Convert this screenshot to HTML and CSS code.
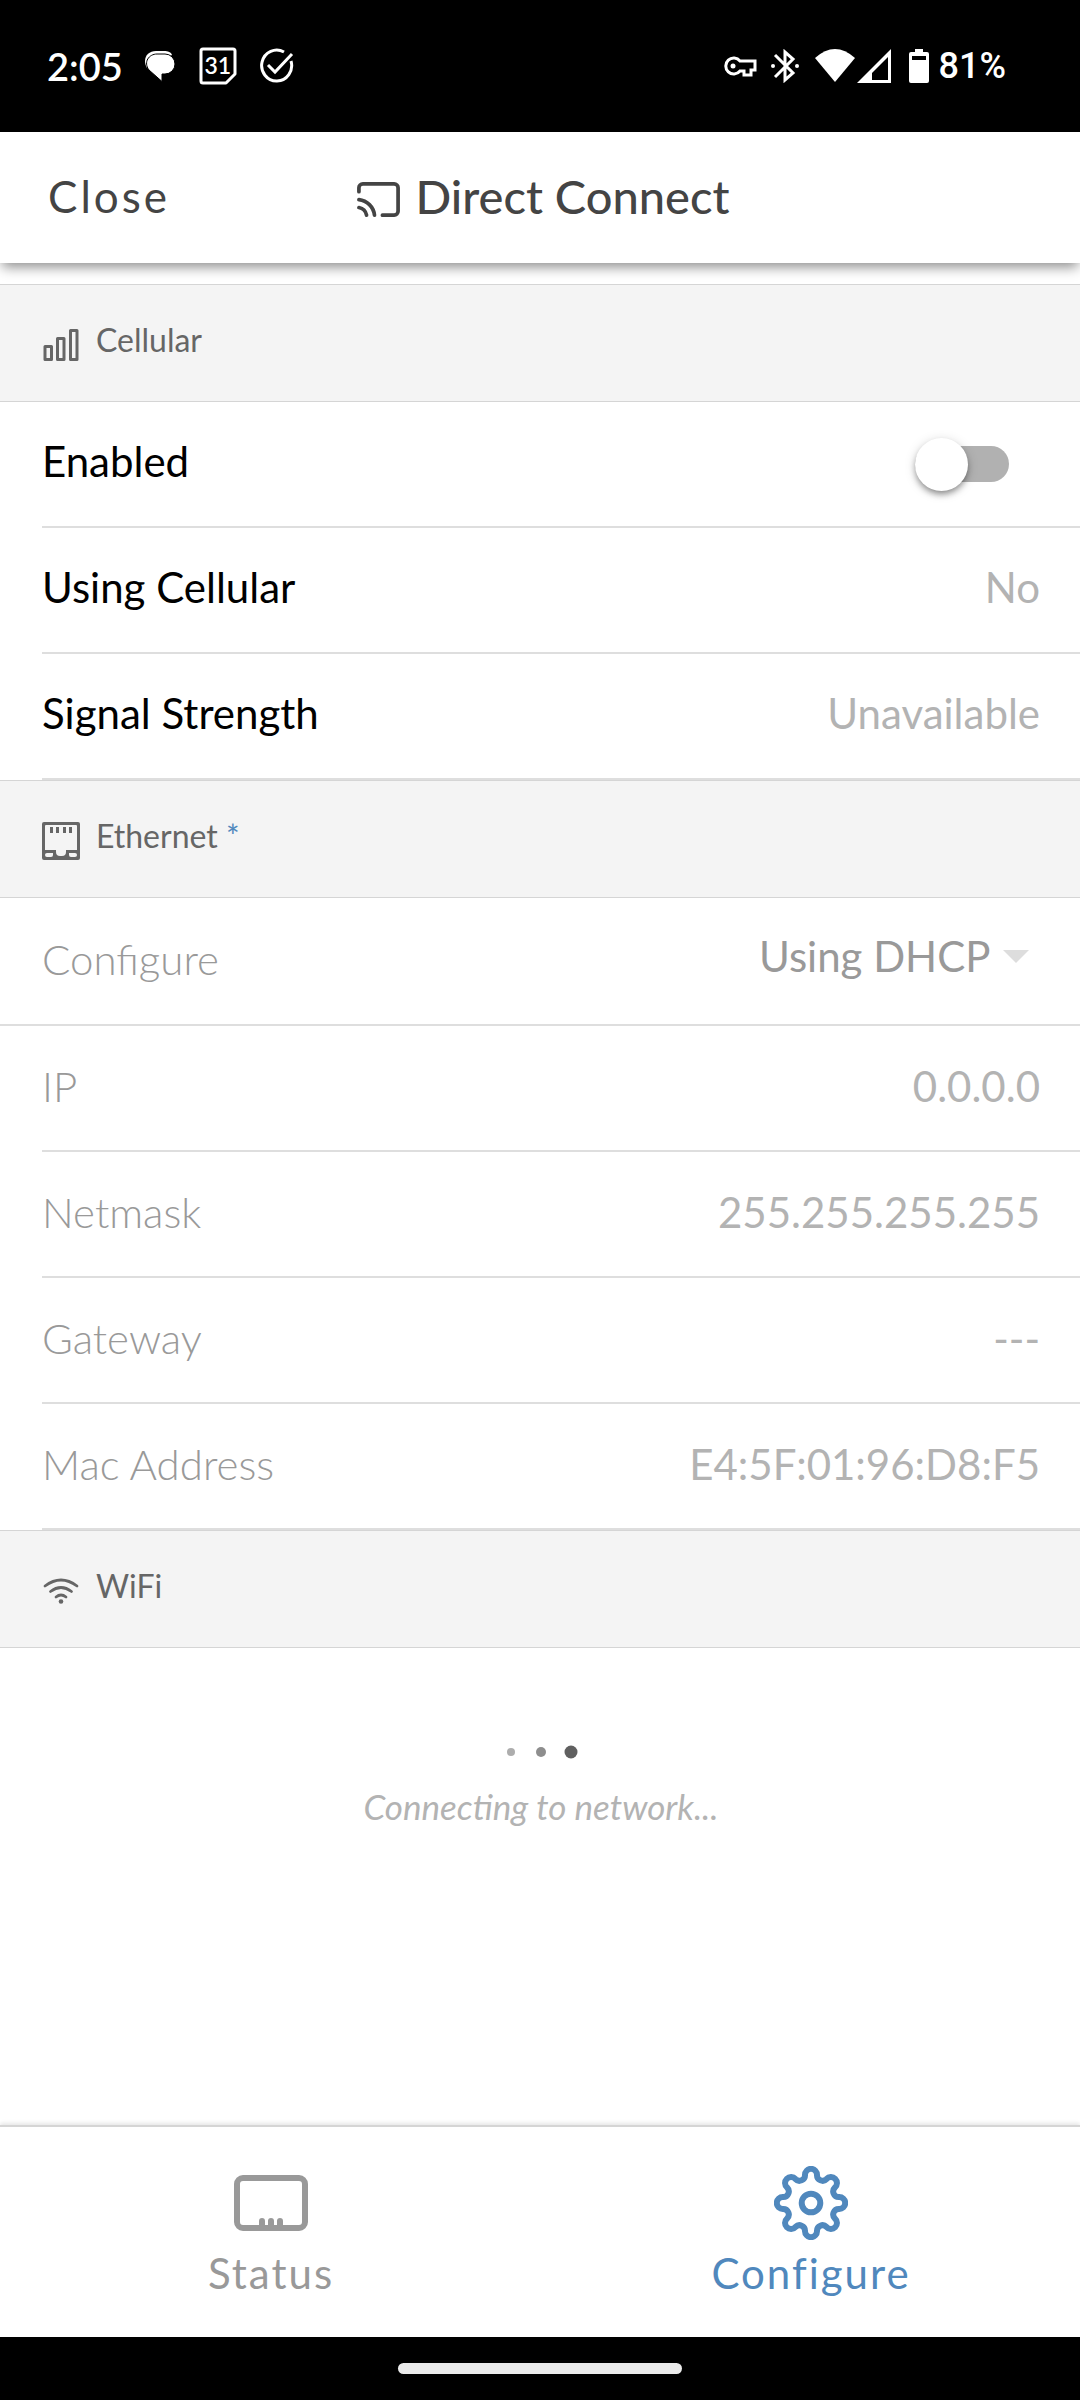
FILE: index.html
```html
<!DOCTYPE html>
<html lang="en">
<head>
  <meta charset="UTF-8" />
  <meta name="viewport" content="width=device-width, initial-scale=1" />
  <title>Direct Connect</title>
  <link rel="stylesheet" href="styles.css">
</head>
<body>
  <div class="status-bar">
    <div class="status-left">
      <span class="clock">2:05</span>
      <svg class="chat" width="32" height="32" viewBox="0 0 32 32">
        <path d="M3 18C-2 9 3 1 12 1h8c4 0 7 1 8 4" fill="#fff"/>
        <path d="M13 4h8a10 10 0 0 1 0 20h-3v7.500L5 20C-1 12 5 4 13 4z" fill="#fff" stroke="#000" stroke-width="1"/>
      </svg>
      <span class="calendar">
        <svg width="38" height="38" viewBox="0 0 38 38" fill="none" stroke="#fff" stroke-width="3" stroke-linejoin="round">
          <path d="M4 2h30a2 2 0 0 1 2 2v23l-9 9H4a2 2 0 0 1-2-2V4a2 2 0 0 1 2-2z"/>
        </svg>
        <span class="calendar-day">31</span>
      </span>
      <svg width="34" height="36" viewBox="0 0 34 36" fill="none" stroke="#fff" stroke-width="3">
        <path d="M24 4A15 15.500 0 1 0 31 13"/>
        <path d="M8 17l7 7L32 6"/>
      </svg>
    </div>
    <div class="status-right">
      <svg class="key" width="34" height="22" viewBox="0 0 34 22" fill="none" stroke="#fff" stroke-width="3">
        <path d="M17 6a8 8 0 1 0 0 10h4v4h7v-5h4V6z"/>
        <circle cx="10" cy="11" r="2.500" fill="#fff" stroke="none"/>
      </svg>
      <svg class="bluetooth" width="28" height="34" viewBox="0 0 28 34" fill="none" stroke="#fff" stroke-width="3">
        <path d="M4 6l18 18-8 7V3l8 7L4 28"/>
        <circle cx="2" cy="17" r="2" fill="#fff" stroke="none"/>
        <circle cx="26" cy="17" r="2" fill="#fff" stroke="none"/>
      </svg>
      <svg width="40" height="34" viewBox="0 0 40 34">
        <path d="M0 9Q20-9 40 9L20 33z" fill="#fff"/>
      </svg>
      <svg class="signal" width="34" height="34" viewBox="0 0 34 34">
        <path d="M34 0v34H0zM31 8L15 24v7h16z" fill="#fff" fill-rule="evenodd"/>
      </svg>
      <svg class="battery" width="20" height="34" viewBox="0 0 20 34">
        <path d="M6 0h8v3h4a2 2 0 0 1 2 2v27a2 2 0 0 1-2 2H2a2 2 0 0 1-2-2V5a2 2 0 0 1 2-2h4zM3 7v4h14V7z" fill="#fff" fill-rule="evenodd"/>
      </svg>
      <span class="percent">81%</span>
    </div>
  </div>

  <header class="toolbar">
    <button class="close-btn" type="button">Close</button>
    <h1 class="title">
      <svg width="47" height="47" viewBox="0 0 24 24" fill="none" stroke="currentColor" stroke-width="1.900" stroke-linecap="round" stroke-linejoin="round">
        <path d="M2 16.100A5 5 0 0 1 5.900 20M2 12.050A9 9 0 0 1 9.950 20M2 8V6a2 2 0 0 1 2-2h16a2 2 0 0 1 2 2v12a2 2 0 0 1-2 2h-6"/>
      </svg>
      Direct Connect
    </h1>
  </header>

  <main class="content">
    <h2 class="section-title">
      <svg width="38" height="38" viewBox="0 0 38 38" fill="none" stroke="currentColor" stroke-width="3" stroke-linejoin="round">
        <path d="M3 20.500h6.500v13H3zM15.500 12.500H22v21h-6.500zM28.500 4.500H35v29h-6.500z"/>
      </svg>
      Cellular
    </h2>
    <div class="row">
      <label for="enabled">Enabled</label>
      <input class="toggle" type="checkbox" role="switch" id="enabled">
    </div>
    <div class="row">
      <span>Using Cellular</span>
      <span class="value">No</span>
    </div>
    <div class="row">
      <span>Signal Strength</span>
      <span class="value">Unavailable</span>
    </div>

    <h2 class="section-title">
      <svg width="38" height="38" viewBox="0 0 38 38" fill="currentColor">
        <path fill-rule="evenodd" d="M2 0h34a2 2 0 0 1 2 2v34a2 2 0 0 1-2 2H2a2 2 0 0 1-2-2V2a2 2 0 0 1 2-2zM4 3a1 1 0 0 0-1 1v24h11v2a4 4 0 0 0 4 4h2a4 4 0 0 0 4-4v-2h11V4a1 1 0 0 0-1-1zM5 31a2 2 0 0 0 0 4h4a2 2 0 0 0 2-2v-2zM27 31v2a2 2 0 0 0 2 2h4a2 2 0 0 0 0-4z"/>
        <path d="M8 5h3v6H8zM14 5h3v6h-3zM21 5h3v6h-3zM27 5h3v6h-3z"/>
      </svg>
      <span>Ethernet <span class="mark">*</span></span>
    </h2>
    <div class="row row-select disabled">
      <label for="mode">Configure</label>
      <div class="select-wrap">
        <select id="mode" disabled>
          <option>Using DHCP</option>
        </select>
      </div>
    </div>
    <div class="row disabled">
      <span class="name">IP</span>
      <span class="value">0.0.0.0</span>
    </div>
    <div class="row disabled">
      <span class="name">Netmask</span>
      <span class="value">255.255.255.255</span>
    </div>
    <div class="row disabled">
      <span class="name">Gateway</span>
      <span class="value">---</span>
    </div>
    <div class="row disabled">
      <span class="name">Mac Address</span>
      <span class="value">E4:5F:01:96:D8:F5</span>
    </div>

    <h2 class="section-title">
      <svg width="38" height="38" viewBox="0 0 38 38" fill="none" stroke="currentColor" stroke-width="2.800" stroke-linecap="round">
        <path d="M3 14Q19 2 35 14M8.500 19.500Q19 11.500 29.500 19.500M14 25Q19 21 24 25"/>
        <circle cx="19" cy="29.500" r="2.300" fill="currentColor" stroke="none"/>
      </svg>
      WiFi
    </h2>
    <div class="loading">
      <svg width="74" height="14" viewBox="0 0 74 14">
        <circle cx="7" cy="7" r="4" fill="#adadad"/>
        <circle cx="37" cy="7" r="5" fill="#8e8e8e"/>
        <circle cx="67" cy="7" r="6.500" fill="#606060"/>
      </svg>
      <p>Connecting to network...</p>
    </div>
  </main>

  <nav class="tabs">
    <button class="tab" type="button">
      <svg width="74" height="74" viewBox="0 0 74 74" fill="none" stroke="currentColor" stroke-width="6" stroke-linecap="round">
        <rect x="3" y="12" width="68" height="50" rx="6"/>
        <path d="M28 55v5M37 55v5M46 55v5"/>
      </svg>
      Status
    </button>
    <button class="tab active" type="button">
      <svg width="74" height="74" viewBox="-37 -37 74 74" fill="none" stroke="currentColor" stroke-width="6">
        <circle r="9.300"/>
        <path d="M27.850-5.990A6 6 0 1 1 27.850 5.990A5.500 5.500 0 0 0 23.930 15.460A6 6 0 1 1 15.460 23.930A5.500 5.500 0 0 0 5.990 27.850A6 6 0 1 1-5.990 27.850A5.500 5.500 0 0 0-15.460 23.930A6 6 0 1 1-23.930 15.460A5.500 5.500 0 0 0-27.850 5.990A6 6 0 1 1-27.850-5.990A5.500 5.500 0 0 0-23.930-15.460A6 6 0 1 1-15.460-23.930A5.500 5.500 0 0 0-5.990-27.850A6 6 0 1 1 5.990-27.850A5.500 5.500 0 0 0 15.460-23.930A6 6 0 1 1 23.930-15.460A5.500 5.500 0 0 0 27.850-5.990z"/>
      </svg>
      Configure
    </button>
  </nav>

  <div class="gesture-bar">
    <div class="gesture-pill"></div>
  </div>
</body>
</html>
```
FILE: styles.css
```css
* {
  box-sizing: border-box;
}
body {
  margin: 0;
  min-height: 100vh;
  display: flex;
  flex-direction: column;
  background: #fff;
  color: #000;
  font-family: Lato, sans-serif;
  font-size: 42px;
  line-height: 50px;
}
svg {
  display: block;
  flex: none;
}
button, select {
  font: inherit;
  color: inherit;
  background: none;
  border: none;
  padding: 0;
  margin: 0;
}

/* System status bar */
.status-bar {
  display: flex;
  justify-content: space-between;
  align-items: center;
  height: 132px;
  padding: 0 74px 0 47px;
  background: #000;
  color: #fff;
  font-size: 38px;
  font-weight: 600;
}
.status-left, .status-right {
  display: flex;
  align-items: center;
}
.status-left {
  gap: 23px;
}
.chat {
  margin-left: -2px;
}
.calendar {
  display: grid;
  place-items: center;
}
.calendar > * {
  grid-area: 1 / 1;
}
.calendar-day {
  font-size: 23px;
  line-height: 24px;
  padding-bottom: 2px;
}
.key {
  margin-right: 14px;
}
.bluetooth {
  margin-right: 16px;
}
.signal {
  margin: 0 18px 0 2px;
}
.percent {
  margin-left: 10px;
  font-family: Roboto, sans-serif;
  font-weight: 500;
  font-size: 36px;
}

/* Toolbar */
.toolbar {
  position: relative;
  z-index: 1;
  display: grid;
  grid-template-columns: 1fr auto 1fr;
  align-items: center;
  min-height: 131px;
  padding: 0 44px 4px 48px;
  background: #fff;
  color: #444;
  box-shadow: 0 6px 12px -2px rgba(0, 0, 0, 0.45);
}
.close-btn {
  justify-self: start;
  font-size: 44px;
  letter-spacing: 3px;
}
.title {
  display: flex;
  align-items: center;
  gap: 14px;
  margin: 0;
  font-size: 47px;
  font-weight: 500;
}
.title svg {
  margin-top: 8px;
}

/* Settings list */
.content {
  flex: 1;
  padding-top: 21px;
}
.section-title {
  display: flex;
  align-items: center;
  gap: 16px;
  height: 118px;
  margin: 0;
  padding: 0 42px 6px;
  background: #f4f4f4;
  border: solid #d5d5d5;
  border-width: 1px 0;
  color: #666;
  font-size: 32px;
  font-weight: 400;
}
.section-title svg {
  margin-top: 10px;
}
.mark {
  color: #5088bd;
}
.row {
  display: flex;
  justify-content: space-between;
  align-items: center;
  min-height: 126px;
  margin-left: 42px;
  padding: 0 40px 6px 0;
  border-bottom: 2px solid #dedede;
}
.value {
  color: #b3b3b3;
}
.row.disabled {
  padding-bottom: 4px;
}
.disabled .name, .disabled label {
  color: #999;
  font-weight: 300;
}
.row-select {
  min-height: 128px;
  margin-left: 0;
  padding-left: 42px;
}
.select-wrap {
  display: flex;
  align-items: center;
  gap: 12px;
  padding: 0 11px 6px 0;
}
.select-wrap::after {
  content: "";
  border: solid transparent;
  border-width: 13px 13px 0;
  border-top-color: #ddd;
}
.select-wrap select {
  appearance: none;
  color: #999;
  opacity: 1;
}
.toggle {
  appearance: none;
  display: flex;
  align-items: center;
  width: 94px;
  height: 36px;
  margin: 6px 31px 0 0;
  border-radius: 18px;
  background: #b1b1b1;
}
.toggle::before {
  content: "";
  width: 53px;
  height: 53px;
  border-radius: 50%;
  background: #fff;
  box-shadow: 0 4px 6px -1px rgba(0, 0, 0, 0.4), 0 2px 12px rgba(0, 0, 0, 0.15);
}
.toggle:checked {
  justify-content: flex-end;
  background: #5088bd;
}
.loading {
  display: flex;
  flex-direction: column;
  align-items: center;
  gap: 22px;
  padding: 97px 0 0 2px;
  color: #b3b3b3;
  font-size: 35px;
  font-style: italic;
}
.loading p {
  margin: 0;
}

/* Bottom tabs */
.tabs {
  display: flex;
  border-top: 2px solid #d5d5d5;
  box-shadow: 0 -2px 4px rgba(0, 0, 0, 0.1);
}
.tab {
  flex: 1;
  display: flex;
  flex-direction: column;
  align-items: center;
  gap: 8px;
  padding: 39px 0 39px 2px;
  color: #999;
  letter-spacing: 2px;
}
.tab.active {
  color: #5088bd;
}

/* System gesture bar */
.gesture-bar {
  display: flex;
  justify-content: center;
  padding: 26px 0;
  background: #000;
}
.gesture-pill {
  width: 284px;
  height: 11px;
  border-radius: 6px;
  background: #ebebeb;
}
```
